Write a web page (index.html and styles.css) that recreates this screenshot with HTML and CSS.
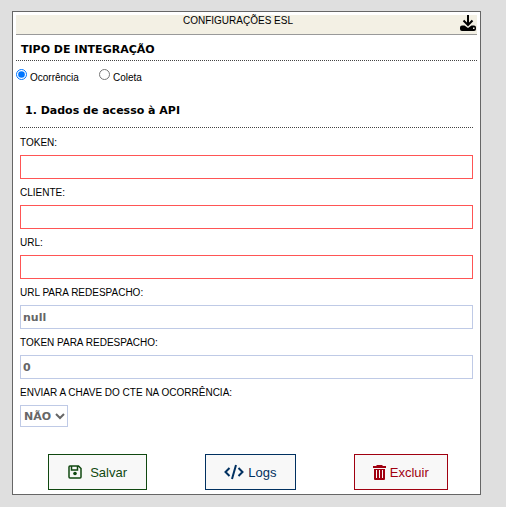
FILE: index.html
```html
<!DOCTYPE html>
<html lang="pt-BR">
<head>
<meta charset="utf-8">
<meta name="viewport" content="width=device-width, initial-scale=1">
<title>Configurações ESL</title>
<link rel="stylesheet" href="styles.css">
</head>
<body>
<form class="panel">
  <header class="bar">
    <h1 class="bar-title">CONFIGURAÇÕES ESL</h1>
    <button class="download" type="button" aria-label="Download">
      <svg width="16" height="16" viewBox="0 0 16 16" aria-hidden="true">
        <path d="M8 0v9M3.500 5.500 8 10l4.500-4.500" fill="none" stroke="#000" stroke-width="2"/>
        <path fill-rule="evenodd" d="M2 10.500h2.500L8 13l3.500-2.500H14a2 2 0 0 1 2 2v1.500a2 2 0 0 1-2 2H2a2 2 0 0 1-2-2v-1.500a2 2 0 0 1 2-2zM13 12.500v1.500h1.500v-1.500z"/>
      </svg>
    </button>
  </header>

  <h2 class="heading">TIPO DE INTEGRAÇÃO</h2>
  <div class="choices">
    <label class="choice"><input type="radio" name="tipo" checked><span>Ocorrência</span></label>
    <label class="choice"><input type="radio" name="tipo"><span>Coleta</span></label>
  </div>

  <section class="access">
    <h2 class="heading subheading">1. Dados de acesso à API</h2>
    <div class="field">
      <label for="token">TOKEN:</label>
      <input class="required" id="token" type="text">
    </div>
    <div class="field">
      <label for="cliente">CLIENTE:</label>
      <input class="required" id="cliente" type="text">
    </div>
    <div class="field">
      <label for="url">URL:</label>
      <input class="required" id="url" type="text">
    </div>
    <div class="field">
      <label for="url-redespacho">URL PARA REDESPACHO:</label>
      <input id="url-redespacho" type="text" value="null">
    </div>
    <div class="field">
      <label for="token-redespacho">TOKEN PARA REDESPACHO:</label>
      <input id="token-redespacho" type="text" value="0">
    </div>
    <div class="field">
      <label for="chave">ENVIAR A CHAVE DO CTE NA OCORRÊNCIA:</label>
      <div class="select">
        <select id="chave"><option>NÃO</option><option>SIM</option></select>
        <svg width="10" height="8" viewBox="0 0 10 8" aria-hidden="true">
          <path d="M1 2l4 4 4-4" fill="none" stroke="#666" stroke-width="2"/>
        </svg>
      </div>
    </div>
  </section>

  <div class="actions">
    <button class="action save" type="button">
      <svg width="14" height="14" viewBox="0 0 14 14" aria-hidden="true">
        <path d="M2 1h8.500L13 3.500V12a1 1 0 0 1-1 1H2a1 1 0 0 1-1-1V2a1 1 0 0 1 1-1zM3.500 1v4h6V1" fill="none" stroke="currentColor" stroke-width="1.500"/>
        <circle cx="7" cy="8.500" r="1.800" fill="currentColor"/>
      </svg>
      <span>Salvar</span>
    </button>
    <button class="action logs" type="button">
      <svg width="20" height="16" viewBox="0 0 20 16" aria-hidden="true">
        <path d="M5.500 4 1.500 8l4 4M14.500 4l4 4-4 4M12 1 8 15" fill="none" stroke="currentColor" stroke-width="2"/>
      </svg>
      <span>Logs</span>
    </button>
    <button class="action delete" type="button">
      <svg width="13" height="15" viewBox="0 0 13 15" aria-hidden="true">
        <path fill="currentColor" d="M4 0h5l1 1h3v2H0V1h3z"/>
        <path fill="currentColor" fill-rule="evenodd" d="M1 4h11v10a1 1 0 0 1-1 1H2a1 1 0 0 1-1-1zM3 5v8h1V5zM6 5v8h1V5zM9 5v8h1V5z"/>
      </svg>
      <span>Excluir</span>
    </button>
  </div>
</form>
</body>
</html>
```
FILE: styles.css
```css
* {
  box-sizing: border-box;
}

body {
  margin: 0;
  padding: 11px 25px 12px 12px;
  background: #dfdfdf;
  color: #000;
  font-family: "Liberation Sans", Arial, sans-serif;
  font-size: 10px;
  line-height: 12px;
}

.panel {
  padding: 3px;
  border: 1px solid #666;
  background: #fff;
}

.bar {
  display: flex;
  align-items: flex-start;
  height: 20px;
  background: #f3f0e4;
  border-bottom: 1px solid #999;
}

.bar-title {
  flex: 1;
  margin: 0;
  font-size: 10px;
  font-weight: normal;
  text-align: center;
}

.download {
  padding: 0 1px 0 0;
  border: 0;
  background: none;
}

svg {
  display: block;
}

.heading {
  margin: 0;
  padding: 8px 5px 3px;
  border-bottom: 1px dotted #444;
  font-family: Verdana, "DejaVu Sans", sans-serif;
  font-size: 11px;
  line-height: 14px;
}

.choices {
  display: flex;
  gap: 20px;
  padding-top: 8px;
}

.choice {
  display: flex;
  gap: 3px;
}

.choice input {
  width: 11px;
  height: 11px;
  margin: 0;
}

.choice span {
  padding-top: 3px;
}

.access {
  padding: 12px 4px 0;
}

.subheading {
  margin-bottom: 1px;
  padding-bottom: 9px;
}

.field {
  display: grid;
  gap: 6px;
  padding-top: 8px;
}

.field input,
.field select {
  height: 24px;
  margin: 0;
  padding: 0 2px;
  border: 1px solid #bfcae6;
  border-radius: 0;
  background: #fff;
  color: #666;
  font-family: Verdana, "DejaVu Sans", sans-serif;
  font-size: 11px;
  font-weight: bold;
}

.field .required {
  border-color: #f55;
}

.select {
  display: grid;
  align-items: center;
  justify-self: start;
}

.select > * {
  grid-area: 1 / 1;
}

.select svg {
  justify-self: end;
  margin-right: 3px;
  pointer-events: none;
}

.field select {
  appearance: none;
  height: 22px;
  padding: 0 15px 0 3px;
}

.actions {
  display: flex;
  justify-content: space-around;
  padding: 27px 0 1px 3px;
}

.action {
  display: flex;
  align-items: center;
  gap: 4px;
  height: 36px;
  padding: 0 18px;
  border: 1px solid;
  background: #f8f8f8;
  font-family: "Liberation Sans", Arial, sans-serif;
  font-size: 13px;
}

.save {
  gap: 8px;
  padding: 0 19px;
  color: #104810;
}

.logs {
  color: #003060;
}

.delete {
  color: #a00010;
}
```
